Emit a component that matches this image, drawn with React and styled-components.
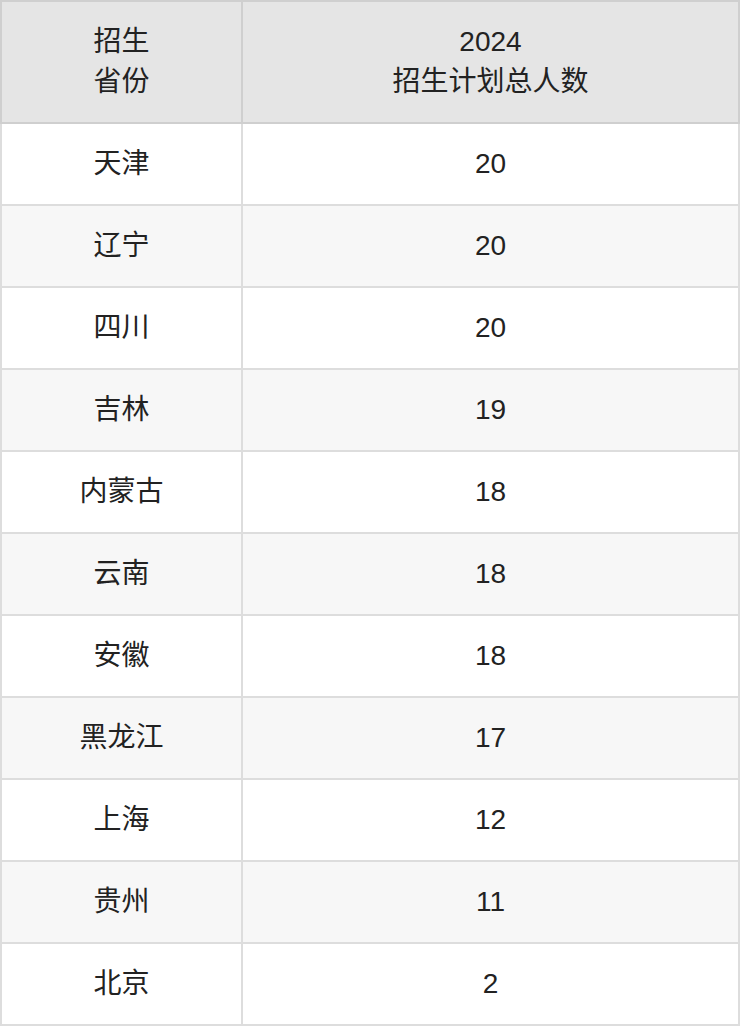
import React from "react";
import styled, { createGlobalStyle } from "styled-components";

const Global = createGlobalStyle`
  html, body { margin: 0; padding: 0; background: #fff; }
  body { font-family: "Liberation Sans", "Noto Sans CJK SC", sans-serif; }
`;

const Table = styled.table`
  width: 740px;
  border-collapse: collapse;
  table-layout: fixed;
  color: #222;
  font-size: 28px;
  line-height: 40px;
`;

const HeadCell = styled.th`
  background: #e5e5e5;
  font-weight: normal;
  height: 120px;
  padding: 0;
  text-align: center;
  vertical-align: middle;
  border: 2px solid #cfcfcf;
`;

const Row = styled.tr`
  background: ${(p) => (p.$alt ? "#f7f7f7" : "#ffffff")};
`;

const Cell = styled.td`
  height: 80px;
  padding: 0;
  text-align: center;
  vertical-align: middle;
  border: 2px solid #dddddd;
`;

const data = [
  ["天津", 20],
  ["辽宁", 20],
  ["四川", 20],
  ["吉林", 19],
  ["内蒙古", 18],
  ["云南", 18],
  ["安徽", 18],
  ["黑龙江", 17],
  ["上海", 12],
  ["贵州", 11],
  ["北京", 2],
];

export default function App() {
  return (
    <>
      <Global />
      <Table>
        <colgroup>
          <col style={{ width: 241 }} />
          <col />
        </colgroup>
        <thead>
          <tr>
            <HeadCell>招生<br />省份</HeadCell>
            <HeadCell>2024<br />招生计划总人数</HeadCell>
          </tr>
        </thead>
        <tbody>
          {data.map(([p, n], i) => (
            <Row key={p} $alt={i % 2 === 1}>
              <Cell>{p}</Cell>
              <Cell>{n}</Cell>
            </Row>
          ))}
        </tbody>
      </Table>
    </>
  );
}
